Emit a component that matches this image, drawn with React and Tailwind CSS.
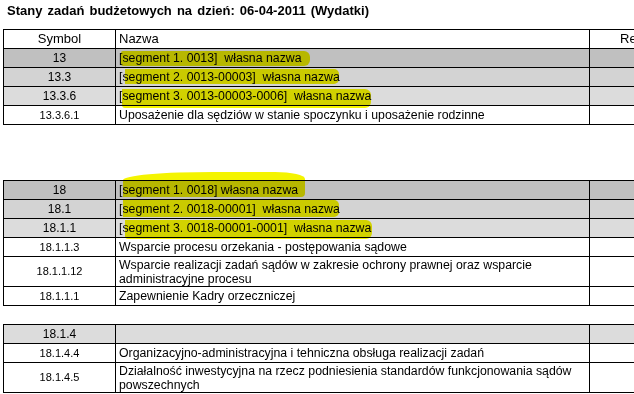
import React from 'react'

const HL = 'absolute bg-[#f4f400] mix-blend-multiply pointer-events-none'

function Row({ sym, name, bg = 'bg-white', symSize = 'text-[11px]', tall = false, hl }) {
  const h = tall ? 'h-[30px]' : 'h-[19px]'
  return (
    <div className={`flex ${h} ${bg} border-b border-black`}>
      <div className={`flex w-[112px] shrink-0 items-center justify-center border-r border-black ${symSize}`}>{sym}</div>
      <div className="relative flex w-[474px] shrink-0 items-center border-r border-black pl-[3px] pr-2 text-[12.3px] leading-[14px]">
        {hl ? <span className={`${HL} ${hl}`} /> : null}
        <span className="relative">{name}</span>
      </div>
      <div className="w-[120px] shrink-0" />
    </div>
  )
}

function Table({ children, className = '' }) {
  return <div className={`ml-[3px] w-[707px] border-t border-l border-black ${className}`}>{children}</div>
}

export default function App() {
  return (
    <div className="h-[394px] w-[634px] overflow-hidden bg-white text-black" style={{ fontFamily: '"Liberation Sans", Arial, sans-serif' }}>
      <h1 className="pl-[7px] pt-[3px] text-[13px] font-bold leading-[15px] [word-spacing:1.5px]">
        Stany zadań budżetowych na dzień: 06-04-2011 (Wydatki)
      </h1>

      <Table className="mt-[11px]">
        <div className="flex h-[19px] border-b border-black text-[13px]">
          <div className="flex w-[112px] shrink-0 items-center justify-center border-r border-black">Symbol</div>
          <div className="flex w-[474px] shrink-0 items-center border-r border-black pl-[3px]">Nazwa</div>
          <div className="flex w-[120px] shrink-0 items-center justify-center">Realizacja</div>
        </div>
        <Row sym="13" symSize="text-[12px]" bg="bg-[#c0c0c0]" name={'[segment 1. 0013]\u00a0 własna nazwa'}
          hl="left-[5px] top-[2px] h-[15px] w-[189px] rounded-r-[6px] rounded-l-[2px]" />
        <Row sym="13.3" symSize="text-[12px]" bg="bg-[#d3d3d3]" name={'[segment 2. 0013-00003]\u00a0 własna nazwa'}
          hl="left-[9px] top-[1px] h-[15px] w-[214px] rounded-r-[5px]" />
        <Row sym="13.3.6" symSize="text-[12px]" bg="bg-[#dcdcdc]" name={'[segment 3. 0013-00003-0006]\u00a0 własna nazwa'}
          hl="left-[6px] top-[2px] h-[19px] w-[249px] rounded-r-[6px] rounded-bl-[3px]" />
        <Row sym="13.3.6.1" name="Uposażenie dla sędziów w stanie spoczynku i uposażenie rodzinne" />
      </Table>

      <Table className="mt-[55px]">
        <Row sym="18" symSize="text-[12px]" bg="bg-[#c0c0c0]" name="[segment 1. 0018] własna nazwa"
          hl="left-[7px] -top-[9px] h-[25px] w-[182px] rounded-tl-[90px_8px] rounded-tr-[30px_7px] rounded-br-[4px]" />
        <Row sym="18.1" symSize="text-[12px]" bg="bg-[#d3d3d3]" name={'[segment 2. 0018-00001]\u00a0 własna nazwa'}
          hl="left-[7px] top-0 h-[17px] w-[216px] rounded-r-[5px]" />
        <Row sym="18.1.1" symSize="text-[12px]" bg="bg-[#dcdcdc]" name={'[segment 3. 0018-00001-0001]\u00a0 własna nazwa'}
          hl="left-[9px] top-[1px] h-[19px] w-[247px] rounded-r-[6px] rounded-bl-[3px]" />
        <Row sym="18.1.1.3" name="Wsparcie procesu orzekania - postępowania sądowe" />
        <Row sym="18.1.1.12" tall name="Wsparcie realizacji zadań sądów w zakresie ochrony prawnej oraz wsparcie administracyjne procesu" />
        <Row sym="18.1.1.1" name="Zapewnienie Kadry orzeczniczej" />
      </Table>

      <Table className="mt-[18px]">
        <Row sym="18.1.4" symSize="text-[12px]" bg="bg-[#dcdcdc]" name="" />
        <Row sym="18.1.4.4" name="Organizacyjno-administracyjna i tehniczna obsługa realizacji zadań" />
        <Row sym="18.1.4.5" tall name="Działalność inwestycyjna na rzecz podniesienia standardów funkcjonowania sądów powszechnych" />
      </Table>
    </div>
  )
}
